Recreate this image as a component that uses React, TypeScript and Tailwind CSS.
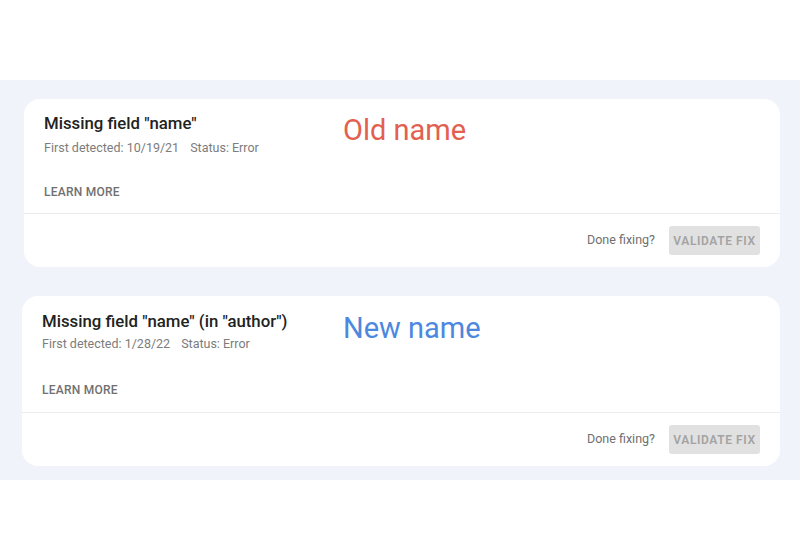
import type { ReactNode } from "react";

type IssueProps = {
  title: string;
  detected: string;
  note: ReactNode;
  className?: string;
  bodyClass?: string;
  subClass?: string;
  learnClass?: string;
  footClass?: string;
};

function IssueCard({ title, detected, note, className, bodyClass, subClass, learnClass, footClass }: IssueProps) {
  return (
    <section className={"rounded-[16px] bg-white " + (className ?? "")}>
      <div className={"flex " + (bodyClass ?? "")}>
        <div className="w-[299px] shrink-0">
          <h2 className="text-[16.8px] font-medium leading-5 text-[#222]">{title}</h2>
          <p className={"flex gap-[11px] text-[12.5px] leading-4 text-[#7c7c7c] " + (subClass ?? "")}>
            <span>First detected: {detected}</span>
            <span>Status: Error</span>
          </p>
          <button
            type="button"
            className={"block text-[12px] font-medium uppercase leading-4 tracking-[0.02em] text-[#707070] " + (learnClass ?? "")}
          >
            Learn more
          </button>
        </div>
        {note}
      </div>
      <div className="h-px bg-[#ececec]" />
      <div className={"flex items-center justify-end gap-[14px] pr-[20px] " + (footClass ?? "")}>
        <span className="text-[12.5px] text-[#707070]">Done fixing?</span>
        <button
          type="button"
          className="h-[29px] w-[91px] rounded-[3px] bg-[#e1e1e1] text-[12px] font-semibold uppercase tracking-[0.05em] text-[#a3a3a3]"
        >
          Validate fix
        </button>
      </div>
    </section>
  );
}

export default function App() {
  return (
    <div className="h-[560px] w-[800px] bg-white font-['Roboto','Liberation_Sans',sans-serif]">
      <div className="h-[80px]" />
      <main className="flex h-[400px] flex-col gap-[29px] bg-[#f0f4fa] pt-[19px]">
        <IssueCard
          className="ml-[24px] mr-[20px]"
          title={'Missing field "name"'}
          detected="10/19/21"
          bodyClass="pl-[20px] pt-[14px] pb-[13px]"
          subClass="mt-[7px]"
          learnClass="mt-[28px]"
          footClass="h-[53px]"
          note={<span className="mt-[1px] text-[29px] leading-8 text-[#e2604f]">Old name</span>}
        />
        <IssueCard
          className="ml-[22px] mr-[20px]"
          title={'Missing field "name" (in "author")'}
          detected="1/28/22"
          bodyClass="pl-[20px] pt-[15px] pb-[14px]"
          subClass="mt-[5px]"
          learnClass="mt-[30px]"
          footClass="h-[53px]"
          note={<span className="mt-[1px] ml-[2px] text-[29px] leading-8 text-[#4c88e0]">New name</span>}
        />
      </main>
    </div>
  );
}
